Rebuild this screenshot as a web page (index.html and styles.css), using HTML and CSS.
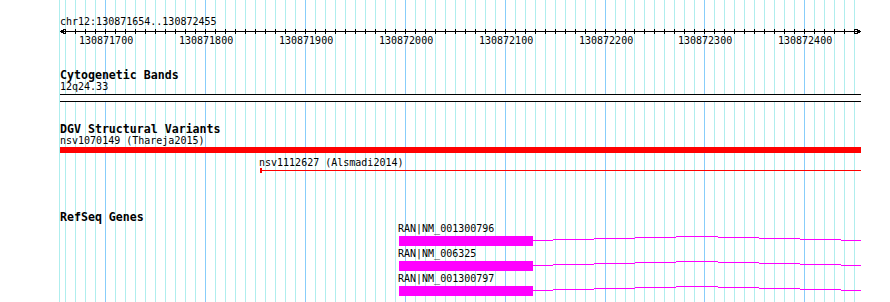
FILE: index.html
```html
<!DOCTYPE html>
<html lang="en">
<head>
    <meta charset="UTF-8">
    <title>chr12:130871654..130872455</title>
    <link rel="stylesheet" href="styles.css">
</head>
<body>
    <div class="browser">
        <div id="grid" class="grid"></div>

        <div class="panel">
            <section class="ruler">
                <div class="segment">chr12:130871654..130872455</div>
                <svg id="scale" class="scale" width="890" height="6"></svg>
                <div id="tick-labels" class="tick-labels"></div>
            </section>

            <section class="track cyto">
                <h2>Cytogenetic Bands</h2>
                <div class="feature-label">12q24.33</div>
                <div class="band"></div>
            </section>

            <section class="track dgv">
                <h2>DGV Structural Variants</h2>
                <div class="feature-label">nsv1070149 (Thareja2015)</div>
                <div class="cnv-bar"></div>
                <div class="feature-label short" style="margin-left: 259px">nsv1112627 (Alsmadi2014)</div>
                <div class="cnv-line" style="margin-left: 260px; width: 601px"></div>
            </section>

            <section class="track refseq">
                <h2>RefSeq Genes</h2>
                <div class="transcripts">
                    <div class="transcript">
                        <div class="feature-label" style="margin-left: 398px">RAN|NM_001300796</div>
                        <svg class="model" width="890" height="10">
                            <rect x="399" y="0" width="134" height="10"/>
                            <polyline points="533,4.5 697,0.5 861,4.5"/>
                        </svg>
                    </div>
                    <div class="transcript">
                        <div class="feature-label" style="margin-left: 398px">RAN|NM_006325</div>
                        <svg class="model" width="890" height="10">
                            <rect x="399" y="0" width="134" height="10"/>
                            <polyline points="533,4.5 697,0.5 861,4.5"/>
                        </svg>
                    </div>
                    <div class="transcript">
                        <div class="feature-label" style="margin-left: 398px">RAN|NM_001300797</div>
                        <svg class="model" width="890" height="10">
                            <rect x="399" y="0" width="134" height="10"/>
                            <polyline points="533,4.5 697,0.5 861,4.5"/>
                        </svg>
                    </div>
                </div>
            </section>
        </div>
    </div>

    <script>
        const SVG_NS = 'http://www.w3.org/2000/svg';
        const BP0 = 130871660;      // first 10bp gridline
        const BP_END = 130872450;
        const PX0 = 65.7;
        const SCALE = 0.99875;      // px per bp

        function col(bp) {
            return Math.floor(PX0 + (bp - BP0) * SCALE);
        }

        function line(parent, x1, y1, x2, y2) {
            const el = document.createElementNS(SVG_NS, 'line');
            el.setAttribute('x1', x1);
            el.setAttribute('y1', y1);
            el.setAttribute('x2', x2);
            el.setAttribute('y2', y2);
            parent.appendChild(el);
        }

        function gridLine(x, major) {
            const el = document.createElement('div');
            el.className = major ? 'vline major' : 'vline';
            el.style.left = x + 'px';
            grid.appendChild(el);
        }

        const grid = document.getElementById('grid');
        const scale = document.getElementById('scale');
        const labels = document.getElementById('tick-labels');

        // left edge of the view
        gridLine(59, false);

        for (let bp = BP0; bp <= BP_END; bp += 10) {
            const x = col(bp);
            const major = bp % 100 === 0;
            gridLine(x, major);
            line(scale, x + 0.5, 1, x + 0.5, 6);

            if (major) {
                const span = document.createElement('span');
                span.textContent = bp;
                span.style.left = (x - 26) + 'px';
                labels.appendChild(span);
            }
        }

        // axis with arrows at both ends
        line(scale, 60, 3.5, 861, 3.5);
        line(scale, 60.5, 3.5, 65.5, 1);
        line(scale, 60.5, 3.5, 65.5, 6);
        line(scale, 860.5, 3.5, 855.5, 1);
        line(scale, 860.5, 3.5, 855.5, 6);
    </script>
</body>
</html>
```

FILE: styles.css
```css
body {
    margin: 0;
    background: #ffffff;
    color: #000000;
    font-family: "DejaVu Sans Mono", monospace;
    font-size: 10px;
    line-height: 13px;
}
.browser {
    position: relative;
    width: 890px;
    height: 302px;
    overflow: hidden;
}
svg {
    display: block;
    shape-rendering: crispEdges;
}
.grid {
    position: absolute;
    top: 0;
    left: 0;
    width: 890px;
    height: 302px;
}
.vline {
    position: absolute;
    top: 0;
    width: 1px;
    height: 302px;
    background: #afeeee;
}
.vline.major {
    background: #87cefa;
}
.panel {
    position: relative;
}
.ruler {
    padding-top: 15px;
}
.segment {
    margin-left: 60px;
}
.scale line {
    stroke: #000000;
    stroke-width: 1;
}
.tick-labels {
    position: relative;
    height: 13px;
}
.tick-labels span {
    position: absolute;
    top: 0;
    width: 54px;
    text-align: center;
}
h2 {
    margin: 0 0 0 60px;
    height: 12px;
    font-size: 11.6px;
    font-weight: bold;
    line-height: 14px;
}
.feature-label {
    margin-left: 60px;
    white-space: nowrap;
}
.feature-label.short {
    height: 12px;
}
.cyto {
    margin-top: 21px;
}
.band {
    box-sizing: border-box;
    margin: 1px 0 0 60px;
    width: 801px;
    height: 8px;
    border-top: 1px solid #000000;
    border-bottom: 1px solid #000000;
    background: #ffffff;
}
.dgv {
    margin-top: 20px;
}
.cnv-bar {
    margin-left: 60px;
    width: 801px;
    height: 6px;
    background: #ff0000;
    margin-bottom: 3px;
}
.cnv-line {
    box-sizing: border-box;
    height: 5px;
    border-left: 2px solid #ff0000;
    background: linear-gradient(#ff0000, #ff0000) 0 2px / 100% 1px no-repeat;
}
.refseq {
    margin-top: 37px;
}
.transcripts {
    margin-top: 1px;
}
.transcript {
    margin-bottom: 2px;
}
.transcript .feature-label {
    margin-top: -1px;
    margin-bottom: 1px;
}
.model rect {
    fill: #ff00ff;
}
.model polyline {
    fill: none;
    stroke: #ff00ff;
    stroke-width: 1;
}
```
